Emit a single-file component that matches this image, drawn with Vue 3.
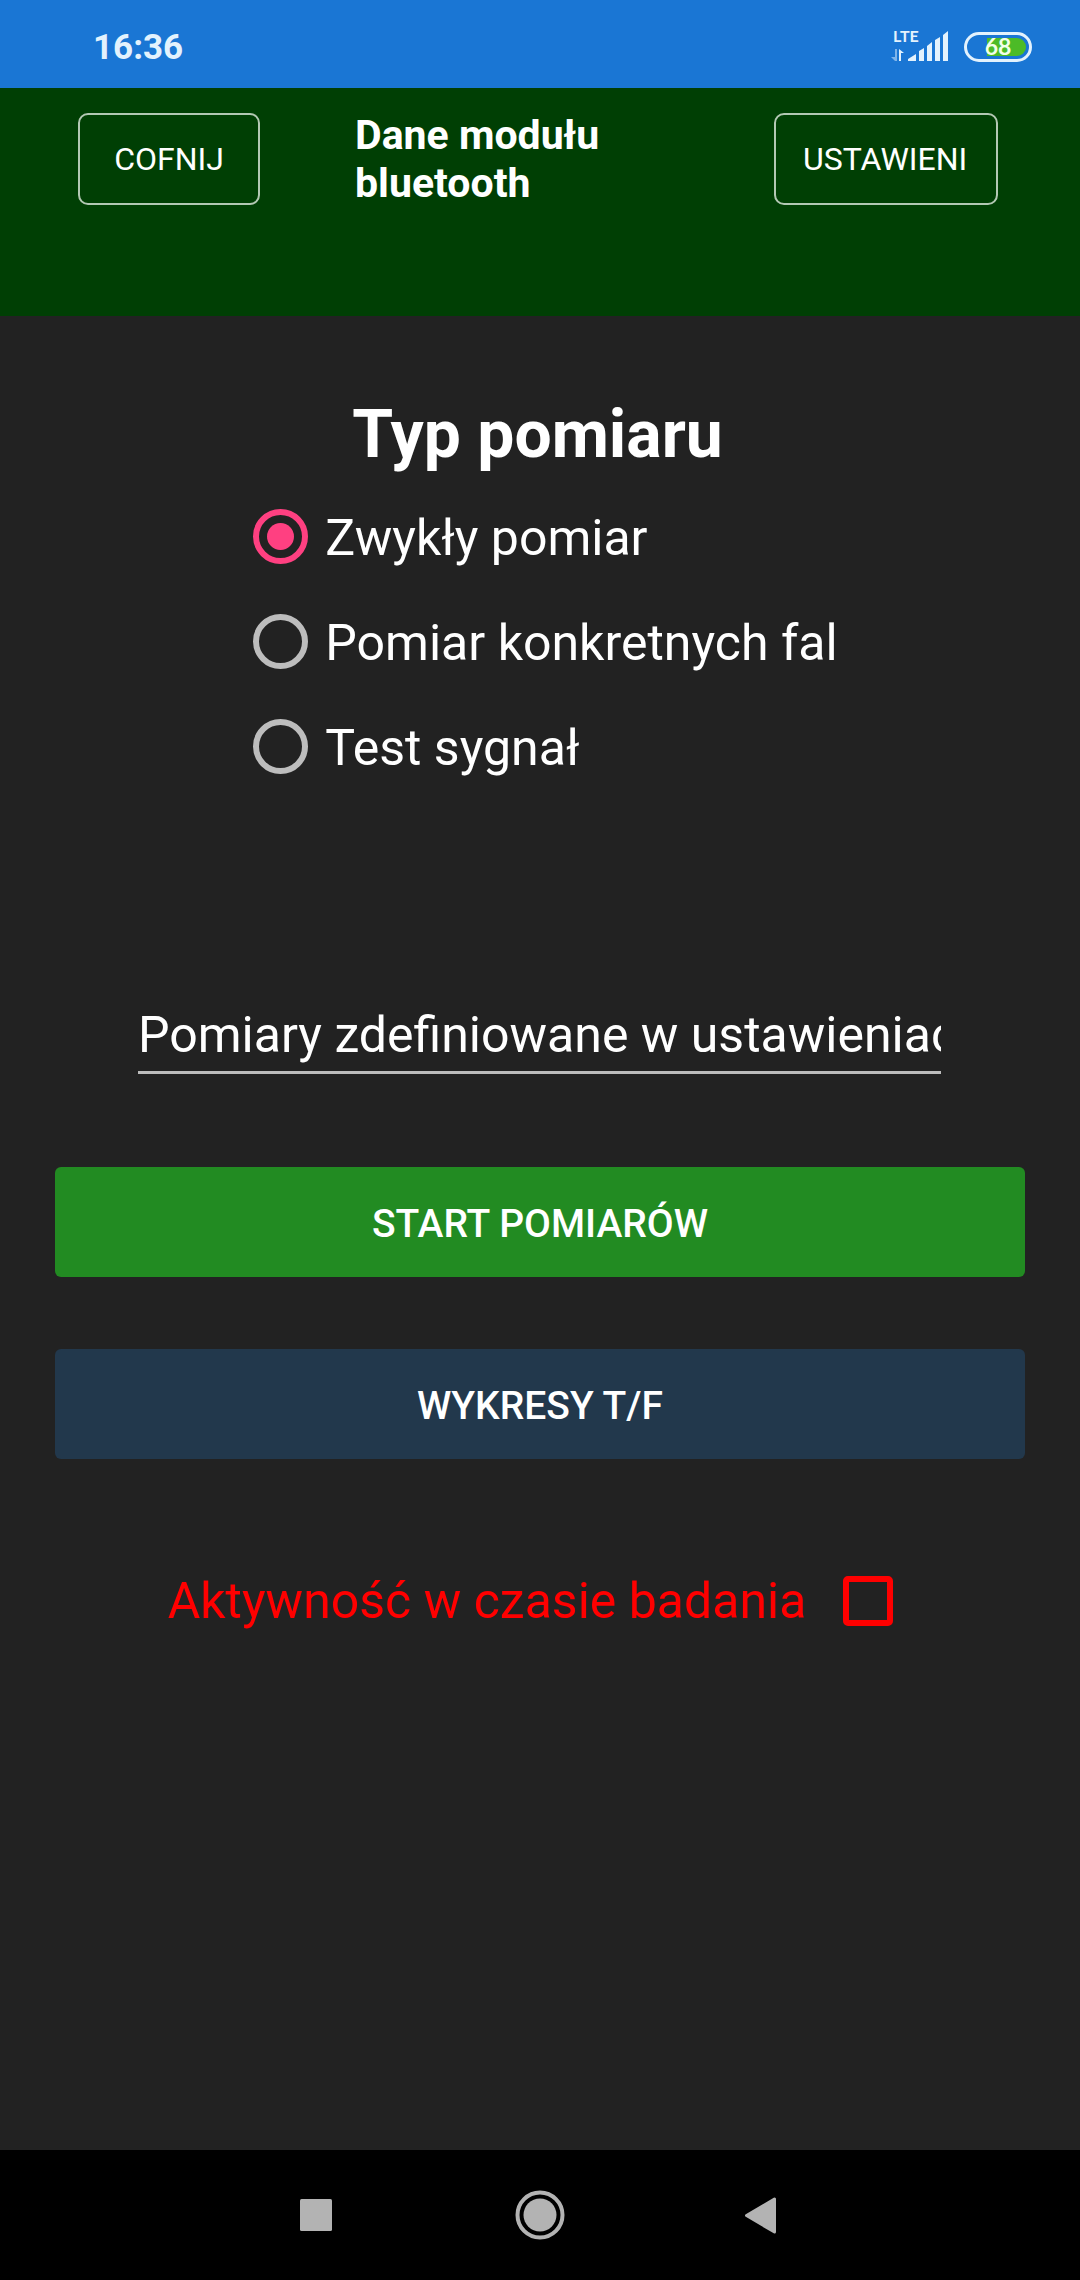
<script setup>
import { ref } from 'vue'

const types = [
  { id: 'normal', label: 'Zwykły pomiar' },
  { id: 'waves', label: 'Pomiar konkretnych fal' },
  { id: 'signal', label: 'Test sygnał' },
]
const type = ref('normal')
const name = ref('Pomiary zdefiniowane w ustawieniach')
const active = ref(false)
</script>

<template>
  <div class="screen">
    <div class="status">
      <span class="clock">16:36</span>
      <div class="indicators">
        <svg width="60" height="48" viewBox="0 0 60 48" fill="#e3f2fd">
          <text class="lte" x="3" y="19">LTE</text>
          <path d="M5 26h2v12h-2l-4-4h4z" opacity=".5" />
          <path d="M9 26l5 4h-3v8h-2z" />
          <path d="M18 38v-2l8-5v7zM29 38V28l5-3v13zM37 38V23l5-4v19zM45 38V17l5-3v24zM53 38V12l5-4v30z" />
        </svg>
        <svg width="68" height="30" viewBox="0 0 68 30">
          <rect x="1.500" y="1.500" width="65" height="27" rx="13.500" fill="none" stroke="#e3f2fd" stroke-width="3" />
          <path d="M23 6h30a9 9 0 0 1 0 18H23z" fill="#4cbb27" />
          <text class="charge" x="34" y="23" text-anchor="middle" fill="#f1ffe9">68</text>
        </svg>
      </div>
    </div>

    <header class="bar">
      <button class="outline back" type="button">COFNIJ</button>
      <h1 class="bar-title">Dane modułu bluetooth</h1>
      <button class="outline settings" type="button">USTAWIENI</button>
    </header>

    <main class="content">
      <h2 id="type-title" class="title">Typ pomiaru</h2>
      <div class="options" role="radiogroup" aria-labelledby="type-title">
        <label v-for="t in types" :key="t.id" class="option">
          <input v-model="type" class="radio" type="radio" name="type" :value="t.id" />
          <span>{{ t.label }}</span>
        </label>
      </div>

      <input v-model="name" class="name" type="text" aria-label="Nazwa pomiaru" />

      <div class="actions">
        <button class="action start" type="button">START POMIARÓW</button>
        <button class="action charts" type="button">WYKRESY T/F</button>
      </div>

      <label class="activity">
        <span>Aktywność w czasie badania</span>
        <input v-model="active" class="check" type="checkbox" />
      </label>
    </main>

    <nav class="nav">
      <button type="button" aria-label="Ostatnie">
        <svg width="50" height="50" viewBox="0 0 50 50"><rect x="9" y="9" width="32" height="32" rx="1.500" fill="#b3b3b3" /></svg>
      </button>
      <button type="button" aria-label="Ekran główny">
        <svg width="50" height="50" viewBox="0 0 50 50">
          <circle cx="25" cy="25" r="22.500" fill="none" stroke="#b3b3b3" stroke-width="4" />
          <circle cx="25" cy="25" r="16.500" fill="#b3b3b3" />
        </svg>
      </button>
      <button type="button" aria-label="Wstecz">
        <svg width="50" height="50" viewBox="0 0 50 50">
          <path d="M7.500 25.500L35.500 9v33z" fill="#b3b3b3" stroke="#b3b3b3" stroke-width="3" stroke-linejoin="round" />
        </svg>
      </button>
    </nav>
  </div>
</template>

<style>
body {
  background: #222222;
}
</style>

<style scoped>
.screen {
  display: flex;
  flex-direction: column;
  min-height: 100vh;
  background: #222222;
  color: #ffffff;
  font-family: Roboto, sans-serif;
}
button,
input {
  box-sizing: border-box;
  margin: 0;
  padding: 0;
  border: 0;
  color: inherit;
  font-family: inherit;
}
svg {
  display: block;
}
.status {
  box-sizing: border-box;
  display: flex;
  align-items: center;
  justify-content: space-between;
  height: 88px;
  padding: 6px 48px 0 93px;
  background: #1a76d4;
}
.clock {
  color: #e3f2fd;
  font-size: 35px;
  font-weight: 700;
}
.indicators {
  display: flex;
  align-items: center;
  gap: 14px;
}
.lte {
  font-family: Lato, sans-serif;
  font-size: 16px;
  font-weight: 700;
}
.charge {
  font-family: Lato, sans-serif;
  font-size: 23px;
  font-weight: 700;
}
.bar {
  box-sizing: border-box;
  display: flex;
  align-items: center;
  height: 228px;
  padding: 0 82px 86px 78px;
  background: #003f04;
}
.outline {
  height: 92px;
  border: 2px solid #b3c8b4;
  border-radius: 10px;
  background: transparent;
  font-size: 32px;
}
.back {
  width: 182px;
}
.settings {
  width: 224px;
  margin-left: auto;
  padding-left: 27px;
  text-align: left;
}
.bar-title {
  width: 30%;
  margin: 0 0 0 95px;
  font-size: 41px;
  font-weight: 700;
  line-height: 48px;
}
.content {
  display: flex;
  flex: 1;
  flex-direction: column;
  padding: 80px 55px 60px;
}
.title {
  margin: 0;
  padding-right: 5px;
  font-size: 66px;
  font-weight: 700;
  line-height: 78px;
  text-align: center;
}
.options {
  align-self: center;
  margin-top: 11px;
  padding-left: 11px;
}
.option {
  display: flex;
  align-items: center;
  gap: 17px;
  height: 105px;
  font-size: 50px;
}
.radio {
  display: grid;
  place-items: center;
  width: 55px;
  height: 55px;
  margin-bottom: 3px;
  border: 6px solid #bdbdbd;
  border-radius: 50%;
  appearance: none;
}
.radio:checked {
  border-color: #ff4081;
}
.radio:checked::before {
  width: 27px;
  height: 27px;
  border-radius: 50%;
  background: #ff4081;
  content: "";
}
.name {
  height: 75px;
  margin: 199px 84px 0 83px;
  border-bottom: 3px solid #bdbdbd;
  border-radius: 0;
  outline: none;
  background: transparent;
  font-size: 50px;
}
.actions {
  display: flex;
  flex-direction: column;
  gap: 72px;
  margin-top: 93px;
}
.action {
  height: 110px;
  padding-top: 3px;
  border-radius: 6px;
  font-size: 39px;
  font-weight: 500;
}
.start {
  background: #228b22;
}
.charts {
  background: #22384c;
}
.activity {
  display: flex;
  align-items: center;
  justify-content: center;
  gap: 37px;
  margin-top: 110px;
  padding-right: 19px;
  color: #ff0000;
  font-size: 50px;
  line-height: 64px;
}
.check {
  width: 50px;
  height: 50px;
  border: 6px solid #ff0000;
  border-radius: 5px;
  appearance: none;
}
.check:checked {
  background: #ff0000;
}
.nav {
  display: flex;
  justify-content: center;
  height: 130px;
  background: #000000;
}
.nav button {
  display: flex;
  align-items: center;
  justify-content: center;
  width: 224px;
  background: transparent;
}
</style>
